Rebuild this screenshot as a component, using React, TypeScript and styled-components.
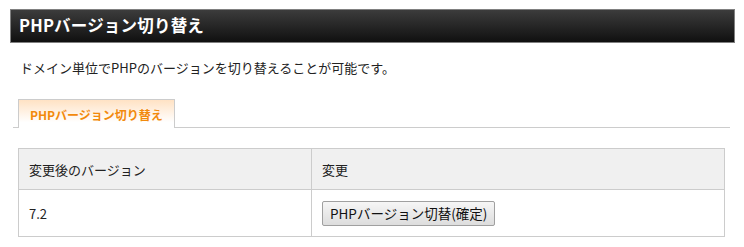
import React from 'react';
import styled, { createGlobalStyle } from 'styled-components';

const GlobalStyle = createGlobalStyle`
  html, body {
    margin: 0;
    padding: 0;
    background: #ffffff;
  }
  body {
    font-family: "Noto Sans CJK JP", "Noto Sans", sans-serif;
    color: #333333;
  }
`;

const Page = styled.div`
  width: 744px;
  padding: 9px 0 0 10px;
  box-sizing: border-box;
`;

const TitleBar = styled.h2`
  margin: 0;
  width: 725px;
  height: 34px;
  box-sizing: border-box;
  border: 1px solid #808080;
  background: linear-gradient(to bottom, #3c3c3c, #101010);
  color: #ffffff;
  font-size: 16.5px;
  font-weight: bold;
  line-height: 31px;
  padding-left: 8px;
  letter-spacing: 0.2px;
`;

const Description = styled.p`
  margin: 15px 0 0 10px;
  font-size: 13px;
  line-height: 20px;
  color: #222222;
`;

const TabStrip = styled.div`
  margin: 21px 0 0 3px;
  width: 717px;
  display: flex;
  border-bottom: 1px solid #cccccc;
  padding-left: 5px;
  box-sizing: border-box;
`;

const Tab = styled.div`
  height: 29px;
  box-sizing: border-box;
  padding: 0 11px;
  border: 1px solid #cccccc;
  border-bottom: none;
  margin-bottom: -1px;
  background: linear-gradient(to bottom, #ffe2c4, #ffffff 80%);
  color: #f28a0c;
  font-size: 12px;
  font-weight: bold;
  line-height: 30px;
`;

const Table = styled.table`
  margin: 20px 0 0 8px;
  width: 707px;
  border-collapse: collapse;
  font-size: 13px;
`;

const HeadCell = styled.th<{ $w?: number }>`
  height: 41px;
  box-sizing: border-box;
  border: 1px solid #cccccc;
  background: #f0f0f0;
  text-align: left;
  font-weight: normal;
  padding: 0 10px;
  color: #222222;
  width: ${({ $w }) => ($w ? `${$w}px` : 'auto')};
`;

const Cell = styled.td`
  height: 47px;
  box-sizing: border-box;
  border: 1px solid #cccccc;
  padding: 0 10px;
  color: #222222;
`;

const Button = styled.button`
  height: 25px;
  padding: 0 7px;
  border: 1px solid #a0a0a0;
  border-radius: 2px;
  background: linear-gradient(to bottom, #f6f6f6, #dddddd);
  font-family: "Noto Sans CJK JP", "Noto Sans", sans-serif;
  font-size: 13.5px;
  color: #111111;
  cursor: pointer;
`;

const App: React.FC = () => {
  return (
    <>
      <GlobalStyle />
      <Page>
        <TitleBar>PHPバージョン切り替え</TitleBar>
        <Description>ドメイン単位でPHPのバージョンを切り替えることが可能です。</Description>
        <TabStrip>
          <Tab>PHPバージョン切り替え</Tab>
        </TabStrip>
        <Table>
          <thead>
            <tr>
              <HeadCell $w={293}>変更後のバージョン</HeadCell>
              <HeadCell>変更</HeadCell>
            </tr>
          </thead>
          <tbody>
            <tr>
              <Cell>7.2</Cell>
              <Cell>
                <Button type="button">PHPバージョン切替(確定)</Button>
              </Cell>
            </tr>
          </tbody>
        </Table>
      </Page>
    </>
  );
};

export default App;
